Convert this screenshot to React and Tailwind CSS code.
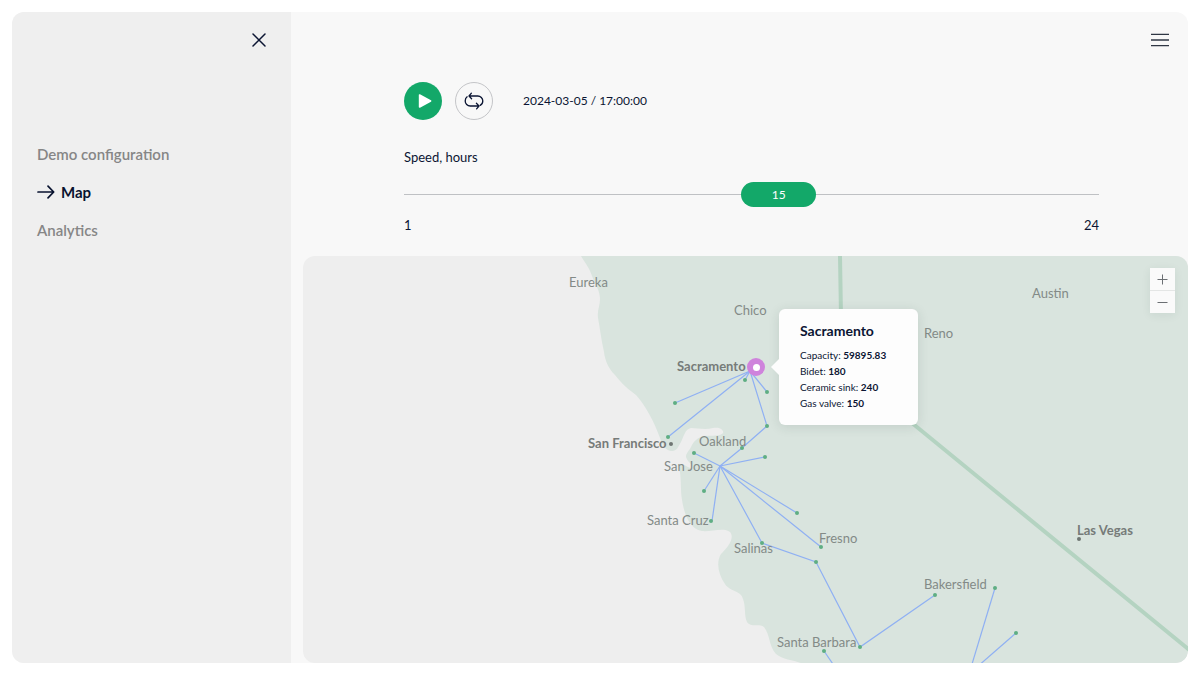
import { useState } from 'react'

const NAV_ITEMS = ['Demo configuration', 'Map', 'Analytics']

// City labels: x is the left edge, y the middle of the text line
const CITIES = [
  { name: 'Eureka', x: 266, y: 26 },
  { name: 'Chico', x: 431, y: 54 },
  { name: 'Sacramento', x: 374, y: 110, major: true },
  { name: 'Reno', x: 621, y: 77 },
  { name: 'Austin', x: 729, y: 37 },
  { name: 'San Francisco', x: 285, y: 187, major: true },
  { name: 'Oakland', x: 396, y: 185 },
  { name: 'San Jose', x: 361, y: 210 },
  { name: 'Santa Cruz', x: 344, y: 264 },
  { name: 'Salinas', x: 431, y: 292 },
  { name: 'Fresno', x: 516, y: 282 },
  { name: 'Las Vegas', x: 774, y: 274, major: true },
  { name: 'Bakersfield', x: 621, y: 328 },
  { name: 'Santa Barbara', x: 474, y: 386 },
]

const ROUTES = [
  [[447, 115], [372, 147]],
  [[447, 115], [365, 181]],
  [[447, 115], [442, 124]],
  [[447, 115], [464, 136]],
  [[447, 115], [464, 170], [439, 192], [417, 210]],
  [[417, 210], [391, 197]],
  [[417, 210], [462, 201]],
  [[417, 210], [401, 235]],
  [[417, 210], [409, 265]],
  [[417, 210], [494, 257]],
  [[417, 210], [518, 291]],
  [[417, 210], [459, 287], [513, 306], [557, 391], [632, 339]],
  [[521, 395], [534, 414]],
  [[692, 332], [666, 418]],
  [[713, 377], [666, 418]],
]

const STOPS = [
  [372, 147], [365, 181], [442, 124], [464, 136], [464, 170], [439, 192],
  [391, 197], [462, 201], [401, 235], [408, 265], [494, 257], [518, 291],
  [459, 287], [513, 306], [557, 391], [632, 339], [521, 395], [692, 332],
  [713, 377],
]

const STOCK = [
  { label: 'Capacity', value: '59895.83' },
  { label: 'Bidet', value: '180' },
  { label: 'Ceramic sink', value: '240' },
  { label: 'Gas valve', value: '150' },
]

const toHours = (position) => Math.round(1 + 23 * Math.pow(position / 100, 0.81))

function ArrowIcon() {
  return (
    <svg viewBox="0 0 18 16" fill="none" stroke="currentColor" strokeWidth="1.7" strokeLinecap="round" strokeLinejoin="round" className="w-[18px] h-4" aria-hidden="true">
      <path d="M1 8h15.5M11 2.2 16.7 8 11 13.8" />
    </svg>
  )
}

function CloseIcon() {
  return (
    <svg viewBox="0 0 14 14" stroke="currentColor" strokeWidth="1.5" strokeLinecap="round" className="size-[14px]" aria-hidden="true">
      <path d="M1 1l12 12M13 1 1 13" />
    </svg>
  )
}

function MenuIcon() {
  return (
    <svg viewBox="0 0 18 14" stroke="currentColor" strokeWidth="1.3" className="w-[18px] h-[14px]" aria-hidden="true">
      <path d="M0 1.3h18M0 7h18M0 12.7h18" />
    </svg>
  )
}

function PlayIcon() {
  return (
    <svg viewBox="0 0 14 14" fill="currentColor" stroke="currentColor" strokeWidth="1.6" strokeLinejoin="round" className="size-[14px] ml-[3px]" aria-hidden="true">
      <path d="M1.6 1v12L12.6 7z" />
    </svg>
  )
}

function LoopIcon() {
  return (
    <svg viewBox="0 0 20 18" fill="none" stroke="currentColor" strokeWidth="1.3" strokeLinecap="round" strokeLinejoin="round" className="w-5 h-[18px]" aria-hidden="true">
      <path d="M7.4 1.2 5 4l2.6 2.7M5 4h8.8a5 5 0 0 1 5 5c0 1.9-1 3.5-2.6 4.4" />
      <path d="M12.6 16.8 15 14l-2.6-2.7M15 14H6.2a5 5 0 0 1-5-5c0-1.9.7-3.3 1.9-4.2" />
    </svg>
  )
}

function Sidebar() {
  return (
    <aside className="w-[279px] shrink-0 bg-[#efefef]">
      <div className="flex h-14 items-center justify-end pr-5">
        <button type="button" aria-label="Close menu" className="flex size-6 items-center justify-center">
          <CloseIcon />
        </button>
      </div>
      <nav className="mt-[76px] flex flex-col gap-[18px] pl-[25px]">
        {NAV_ITEMS.map(item => (
          <a
            key={item}
            href="#"
            aria-current={item === 'Map' ? 'page' : undefined}
            className={`flex items-center gap-[6px] text-[15px] leading-5 ${item === 'Map' ? 'font-bold text-[#08122f]' : 'font-semibold text-[#868686]'}`}
          >
            {item === 'Map' && <ArrowIcon />}
            {item}
          </a>
        ))}
      </nav>
    </aside>
  )
}

function SpeedSlider() {
  const [position, setPosition] = useState(54.4)
  const ratio = position / 100

  return (
    <div className="mt-[27px]">
      <label htmlFor="speed" className="block text-[13px] leading-5">Speed, hours</label>
      <div className="relative mt-[15px] flex h-[25px] items-center">
        <input
          id="speed"
          type="range"
          min="0"
          max="100"
          step="0.1"
          value={position}
          aria-valuetext={`${toHours(position)} hours`}
          onChange={(e) => setPosition(Number(e.target.value))}
          className="h-[25px] w-full cursor-pointer appearance-none bg-transparent
            [&::-webkit-slider-runnable-track]:h-px [&::-webkit-slider-runnable-track]:bg-[#bfc1c4]
            [&::-webkit-slider-thumb]:-mt-3 [&::-webkit-slider-thumb]:h-[25px] [&::-webkit-slider-thumb]:w-[75px]
            [&::-webkit-slider-thumb]:appearance-none [&::-webkit-slider-thumb]:rounded-full [&::-webkit-slider-thumb]:bg-[#13a869]"
        />
        {/* Value rides on top of the thumb */}
        <output
          htmlFor="speed"
          className="pointer-events-none absolute top-0 w-[75px] text-center text-xs leading-[25px] text-white"
          style={{ left: `calc((100% - 75px) * ${ratio})` }}
        >
          {toHours(position)}
        </output>
      </div>
      <div className="mt-2 flex justify-between text-[13px] leading-5">
        <span>1</span>
        <span>24</span>
      </div>
    </div>
  )
}

function CityPopup() {
  return (
    <div className="absolute top-[53px] left-[476px] w-[139px] rounded-md bg-[#fdfdfd] px-[21px] pt-3 pb-[14px] shadow-[0_2px_12px_rgba(30,60,50,0.12)]">
      <svg viewBox="0 0 8 18" className="absolute top-[49px] -left-2 h-[18px] w-2 fill-[#fdfdfd]" aria-hidden="true">
        <path d="M8 1 0 9l8 8z" />
      </svg>
      <h2 className="text-sm leading-5 font-bold">Sacramento</h2>
      <ul className="mt-[6px] text-[10px] leading-4 whitespace-nowrap">
        {STOCK.map(row => (
          <li key={row.label}>{row.label}: <b>{row.value}</b></li>
        ))}
      </ul>
    </div>
  )
}

function NetworkMap() {
  return (
    <section aria-label="Delivery map" className="relative mt-[21px] min-h-[400px] flex-1 overflow-hidden rounded-xl bg-[#eeeeee]">
      <svg className="absolute inset-0 size-full" aria-hidden="true">
        {/* Mainland */}
        <path
          fill="#d9e4de"
          d="M278 0C282 7 286 11 289 20C293 30 297 35 297 43C297 50 294 54 295 62C297 72 298 83 301 96C302 105 306 113 312 119C320 129 325 133 333 139C342 149 351 165 357 182C360 190 363 195 369 195C374 195 375 191 378 186C381 180 382 173 388 172C394 172 402 174 410 172C417 171 421 174 420 177C416 181 409 179 401 180C395 181 390 186 388 191C386 195 383 197 383 201C385 207 390 208 389 212C386 213 380 206 375 209C379 217 377 232 379 244C381 257 386 273 399 275C408 276 421 271 427 276C432 282 425 291 418 298C413 306 415 318 422 328C427 336 438 334 440 343C443 351 441 360 444 366C448 372 456 367 461 371C467 378 466 391 473 398C480 404 492 404 500 408L900 700H3000V0Z"
        />
        {/* State line */}
        <path d="M537 0L538 60L598 158L884 392L1400 814" fill="none" stroke="#b4d3c1" strokeWidth="4" />
        {ROUTES.map((points, i) => (
          <polyline key={i} points={points.join(' ')} fill="none" stroke="#8fb0f3" strokeWidth="1.2" />
        ))}
        {STOPS.map(([x, y]) => (
          <circle key={`${x}-${y}`} cx={x} cy={y} r="2" fill="#5fae83" />
        ))}
        <circle cx="368" cy="188" r="2" fill="#6f7673" />
        <circle cx="776" cy="283" r="2" fill="#6f7673" />
      </svg>

      {CITIES.map(city => (
        <span
          key={city.name}
          className={`absolute -translate-y-1/2 text-[13px] leading-4 whitespace-nowrap ${city.major ? 'font-bold text-[#767b79]' : 'text-[#838a87]'}`}
          style={{ left: city.x, top: city.y }}
        >
          {city.name}
        </span>
      ))}

      <button
        type="button"
        aria-label="Sacramento details"
        className="absolute top-[102px] left-[444px] flex size-[18px] items-center justify-center rounded-full bg-[#cf83dc]"
      >
        <span className="size-[7px] rounded-full bg-white" />
      </button>
      <CityPopup />

      <div className="absolute top-3 right-[13px] flex flex-col gap-px bg-[#e4e6e5] shadow-[0_2px_10px_rgba(30,60,50,0.08)]">
        <button type="button" aria-label="Zoom in" className="flex h-[22px] w-[25px] items-center justify-center bg-[#fafafa] text-[#6b6f73]">
          <svg viewBox="0 0 11 11" stroke="currentColor" className="size-[11px]" aria-hidden="true">
            <path d="M.5 5.5h10M5.5.5v10" />
          </svg>
        </button>
        <button type="button" aria-label="Zoom out" className="flex h-[22px] w-[25px] items-center justify-center bg-[#fafafa] text-[#6b6f73]">
          <svg viewBox="0 0 11 11" stroke="currentColor" className="size-[11px]" aria-hidden="true">
            <path d="M.5 5.5h10" />
          </svg>
        </button>
      </div>
    </section>
  )
}

export default function App() {
  return (
    <div className="min-h-screen bg-white p-3 font-['Lato',sans-serif] text-[#0b1533] flex">
      <div className="flex flex-1 overflow-hidden rounded-xl bg-[#f8f8f8]">
        <Sidebar />
        <main className="flex min-w-0 flex-1 flex-col pl-3">
          <header className="flex h-14 items-center justify-end pr-4">
            <button type="button" aria-label="Open menu" className="flex size-6 items-center justify-center text-[#2f3744]">
              <MenuIcon />
            </button>
          </header>

          <div className="pt-[14px] pr-[89px] pl-[101px]">
            <div className="flex items-center">
              <button type="button" aria-label="Play" className="flex size-[38px] items-center justify-center rounded-full bg-[#13a869] text-white">
                <PlayIcon />
              </button>
              <button type="button" aria-label="Repeat" className="ml-[13px] flex size-[38px] items-center justify-center rounded-full border border-[#c4c5c8]">
                <LoopIcon />
              </button>
              <time dateTime="2024-03-05T17:00:00" className="ml-[30px] text-xs leading-5">2024-03-05 / 17:00:00</time>
            </div>
            <SpeedSlider />
          </div>

          <NetworkMap />
        </main>
      </div>
    </div>
  )
}
